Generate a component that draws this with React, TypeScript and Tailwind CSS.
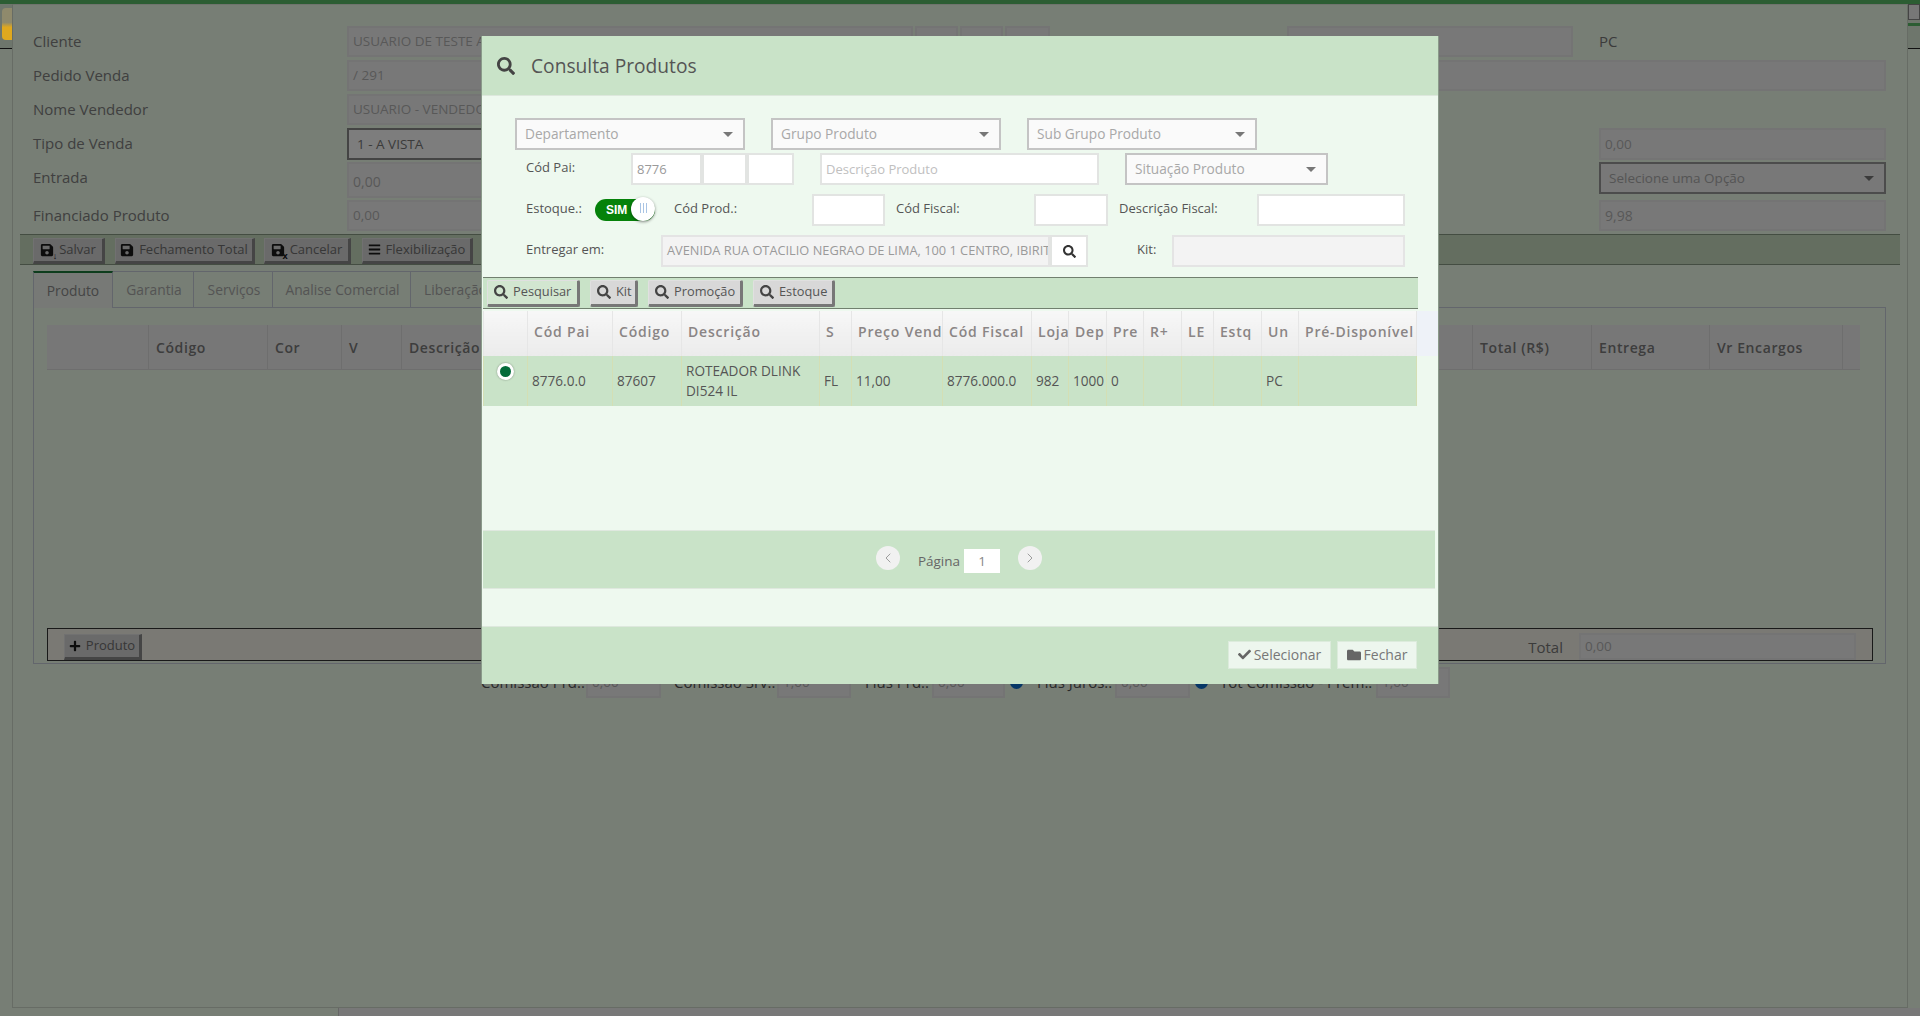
import { ChevronLeft, ChevronRight } from "lucide-react";
import { FaBars, FaCheck, FaFolder, FaPlus, FaSave, FaSearch } from "react-icons/fa";
import type { ReactNode } from "react";

const cols = [
  { w: "w-[44px]", t: "" },
  { w: "w-[85px]", t: "Cód Pai" },
  { w: "w-[69px]", t: "Código" },
  { w: "w-[138px]", t: "Descrição" },
  { w: "w-[32px]", t: "S" },
  { w: "w-[91px]", t: "Preço Venda" },
  { w: "w-[89px]", t: "Cód Fiscal" },
  { w: "w-[37px]", t: "Loja" },
  { w: "w-[38px]", t: "Dep" },
  { w: "w-[37px]", t: "Pre" },
  { w: "w-[38px]", t: "R+" },
  { w: "w-[32px]", t: "LE" },
  { w: "w-[48px]", t: "Estq" },
  { w: "w-[37px]", t: "Un" },
  { w: "w-[118px]", t: "Pré-Disponível" },
];

const row = ["", "8776.0.0", "87607", "ROTEADOR DLINK DI524 IL", "FL", "11,00", "8776.000.0", "982", "1000", "0", "", "", "", "PC", ""];

const Disabled = ({ className, value }: { className: string; value?: string }) => (
  <div className={`h-full border-2 border-[#e4e4e4] bg-[#f3f3f3] pl-[4px] flex items-center text-[12.8px] text-[#9a9a9a] overflow-hidden whitespace-nowrap ${className}`}>
    {value}
  </div>
);

const Arrow = () => <span className="ml-auto border-x-[5px] border-t-[5px] border-x-transparent border-t-[#777]" />;

const Select = ({ className, label }: { className: string; label: string }) => (
  <div className={`h-full flex items-center border-2 border-[#c4c4c4] pl-[8px] pr-[10px] pt-[1px] bg-[#fafafa] text-[13.7px] text-[#a8a8a8] ${className}`}>
    {label}
    <Arrow />
  </div>
);

const Box = ({ className, value }: { className: string; value?: string }) => (
  <div className={`h-full bg-white border-2 border-[#e2e4e2] px-[4px] pt-[1px] flex items-center text-[13px] text-[#9a9a9a] ${className}`}>
    {value}
  </div>
);

const ToolButton = ({ label, className }: { label: string; className: string }) => (
  <button className={`h-[27px] flex items-center gap-[5px] pl-[6px] border-t border-l border-[#e0e0e0] border-r-[3px] border-b-[3px] border-r-[#777] border-b-[#777] rounded-[2px] text-[12.8px] text-[#555] ${className}`}>
    <FaSearch className="size-[14px] text-[#444]" />
    {label}
  </button>
);

const FormLabel = ({ className, children }: { className: string; children: ReactNode }) => (
  <span className={`text-[13px] text-[#555] -mt-[3px] shrink-0 ${className}`}>{children}</span>
);

const Modal = () => (
  <div className="absolute left-[481px] top-[36px] w-[958px] h-[648px] flex flex-col bg-[#eef9ef] border-l border-r border-[#8a9a8a] text-[#555]">
    <div className="h-[60px] shrink-0 bg-[#c9e3c8] border-b border-[#dde8dd] flex items-center pl-[15px]">
      <FaSearch className="size-[18px] text-[#444]" />
      <span className="ml-[16px] mt-[2px] text-[19.2px] text-[#555]">Consulta Produtos</span>
    </div>
    <div className="flex-1 pl-[1px]">
      <div className="mt-[22px] ml-[32px] h-[32px] flex gap-[26px]">
        <Select className="w-[230px]" label="Departamento" />
        <Select className="w-[230px]" label="Grupo Produto" />
        <Select className="w-[230px]" label="Sub Grupo Produto" />
      </div>
      <div className="mt-[3px] ml-[43px] h-[32px] flex items-center">
        <FormLabel className="w-[105px]">Cód Pai:</FormLabel>
        <Box className="w-[71px]" value="8776" />
        <Box className="w-[45px]" />
        <Box className="w-[47px]" />
        <Box className="w-[279px] ml-[26px] text-[#c0c0c0]" value="Descrição Produto" />
        <Select className="w-[203px] ml-[26px]" label="Situação Produto" />
      </div>
      <div className="mt-[9px] ml-[43px] h-[32px] flex items-center">
        <FormLabel className="w-[69px]">Estoque.:</FormLabel>
        <div className="relative w-[60px] h-[22px] rounded-full bg-[#05820a] flex items-center pl-[11px] text-[12px] font-bold text-white font-['Liberation_Sans',sans-serif]">
          SIM
          <span className="absolute right-0 -top-[2px] size-[24px] rounded-full bg-white shadow-[0_1px_3px_rgba(0,0,0,0.45)] flex items-center justify-center gap-[2px] pb-[3px]">
            <i className="w-px h-[10px] bg-[#a9c4e4]" />
            <i className="w-px h-[10px] bg-[#a9c4e4]" />
            <i className="w-px h-[10px] bg-[#a9c4e4]" />
          </span>
        </div>
        <FormLabel className="w-[138px] ml-[19px]">Cód Prod.:</FormLabel>
        <Box className="w-[73px]" />
        <FormLabel className="w-[138px] ml-[11px]">Cód Fiscal:</FormLabel>
        <Box className="w-[74px]" />
        <FormLabel className="w-[138px] ml-[11px]">Descrição Fiscal:</FormLabel>
        <Box className="w-[148px]" />
      </div>
      <div className="mt-[9px] ml-[43px] h-[32px] flex items-center">
        <FormLabel className="w-[135px]">Entregar em:</FormLabel>
        <Disabled className="w-[389px]" value="AVENIDA RUA OTACILIO NEGRAO DE LIMA, 100 1 CENTRO, IBIRITE" />
        <button className="h-full w-[38px] bg-white border-2 border-[#e2e4e2] flex items-center justify-center">
          <FaSearch className="size-[13px] text-[#333]" />
        </button>
        <FormLabel className="w-[35px] ml-[49px]">Kit:</FormLabel>
        <Disabled className="w-[233px]" />
      </div>
      <div className="mt-[10px] h-[32px] w-[935px] bg-[#c9e3c8] border-y border-[#71806f] flex items-center pl-[4px] gap-[10px]">
        <ToolButton className="bg-[#d2e6d0] w-[93px]" label="Pesquisar" />
        <ToolButton className="bg-[#d8d8d8] w-[48px]" label="Kit" />
        <ToolButton className="bg-[#d8d8d8] w-[95px]" label="Promoção" />
        <ToolButton className="bg-[#d8d8d8] w-[82px]" label="Estoque" />
      </div>
      <div className="mt-[2px] h-[96px] bg-[linear-gradient(#eef2f8_0,#eef2f8_45px,transparent_45px)]">
        <table className="table-fixed w-[933px] border-collapse">
          <thead>
            <tr className="h-[45px]">
              {cols.map((c) => (
                <th key={c.t} className={`${c.w} bg-[linear-gradient(#f7f7f7,#ebebeb)] border-l border-r border-[#e6e6e6] pl-[6px] pb-[4px] text-left text-[14px] font-semibold tracking-[0.8px] text-[#8a8585] overflow-hidden whitespace-nowrap`}>
                  {c.t}
                </th>
              ))}
            </tr>
          </thead>
          <tbody>
            <tr className="h-[50px] bg-[#c9e3c8]">
              {row.map((v, i) => (
                <td key={i} className="relative border-l border-r border-[#d4dfb4] pl-[4px] pr-[2px] text-[13.6px] leading-[20px] text-[#555]">
                  {i === 0 ? (
                    <span className="absolute left-[13px] top-[7px] size-[17px] rounded-full bg-white shadow-[0_0_2px_rgba(0,0,0,0.4)] flex items-center justify-center">
                      <i className="size-[11px] rounded-full bg-[#046b3a]" />
                    </span>
                  ) : (
                    v
                  )}
                </td>
              ))}
            </tr>
          </tbody>
        </table>
      </div>
      <div className="mt-[123px] h-[59px] w-[952px] bg-[#c9e3c8] border-y border-[#dfe8df] flex items-center justify-center text-[13.5px]">
        <span className="-mt-[3px] size-[24px] rounded-full bg-[#f1f1f1] flex items-center justify-center">
          <ChevronLeft strokeWidth={1.2} className="size-[16px] text-[#888]" />
        </span>
        <span className="ml-[18px] mt-[3px] text-[#666]">Página</span>
        <span className="ml-[4px] mt-[3px] w-[36px] h-[24px] bg-white flex items-center justify-center text-[#888]">1</span>
        <span className="ml-[18px] -mt-[3px] size-[24px] rounded-full bg-[#f1f1f1] flex items-center justify-center">
          <ChevronRight strokeWidth={1.2} className="size-[16px] text-[#888]" />
        </span>
      </div>
    </div>
    <div className="h-[58px] shrink-0 bg-[#c9e3c8] border-t border-[#dde8dd] flex items-center justify-end gap-[6px] pr-[21px] pb-[2px]">
      <button className="h-[28px] w-[103px] flex items-center justify-center gap-[3px] bg-[#edf6ee] border border-[#dcebdc] text-[14px] text-[#777]">
        <FaCheck className="size-[13px] text-[#666]" />
        Selecionar
      </button>
      <button className="h-[28px] w-[80px] flex items-center justify-center gap-[3px] bg-[#edf6ee] border border-[#dcebdc] text-[14px] text-[#777]">
        <FaFolder className="size-[14px] text-[#666]" />
        Fechar
      </button>
    </div>
  </div>
);

const BgButton = ({ icon, label, className }: { icon: ReactNode; label: string; className: string }) => (
  <button className={`h-[26px] flex items-center justify-center gap-[5px] bg-[#d4d4d4] border-l border-t border-[#e2e2e2] border-r-[3px] border-b-[3px] border-r-[#8a8a8a] border-b-[#8a8a8a] text-[13px] text-[#6e6e6e] ${className}`}>
    {icon}
    {label}
  </button>
);

const SaveIcon = ({ mark }: { mark?: string }) => (
  <span className="relative inline-flex">
    <FaSave className="size-[14px] text-[#1a1a1a]" />
    {mark && <span className="absolute -right-[3px] -bottom-[3px] text-[9px] leading-none font-bold text-[#1a1a1a]">{mark}</span>}
  </span>
);

const BgLabel = ({ children, className = "" }: { children: ReactNode; className?: string }) => (
  <span className={`w-[314px] shrink-0 text-[15px] text-[#808080] ${className}`}>{children}</span>
);

const BgInput = ({ className, value }: { className: string; value?: string }) => (
  <div className={`h-full border-2 border-[#e8e8e8] bg-[#f0f0f0] flex items-center pl-[4px] text-[13.5px] text-[#b0b0b0] ${className}`}>
    {value}
  </div>
);

const tableHead = [
  { w: "w-[101px]", t: "" },
  { w: "w-[119px]", t: "Código" },
  { w: "w-[74px]", t: "Cor" },
  { w: "w-[60px]", t: "V" },
  { w: "flex-1", t: "Descrição" },
  { w: "w-[119px]", t: "Total (R$)" },
  { w: "w-[118px]", t: "Entrega" },
  { w: "w-[133px]", t: "Vr Encargos" },
  { w: "w-[18px]", t: "" },
];

export default function App() {
  return (
    <div className="relative h-[1016px] w-[1920px] overflow-hidden bg-[#eefcea] font-['Open_Sans',sans-serif]">
      <div className="h-[4px] bg-[#59ba66]" />
      <div className="flex h-[1004px]">
        <div className="w-[12px] shrink-0">
          <div className="h-[45px] border-b border-[#222] bg-[#dcedd8]" />
        </div>
        <div className="flex-1 border border-[#cfd8ca] border-t-[#dfe6db]">
          <div className="pl-[20px] pt-[21px] pr-[21px]">
            <div className="h-[31px] flex items-center">
              <BgLabel>Cliente</BgLabel>
              <BgInput className="w-[566px]" value="USUARIO DE TESTE A" />
              <BgInput className="w-[43px] ml-[2px]" />
              <BgInput className="w-[43px] ml-[2px]" />
              <BgInput className="w-[45px] ml-[2px]" />
              <BgInput className="w-[286px] ml-[237px]" />
              <span className="ml-[26px] text-[15px] text-[#777]">PC</span>
            </div>
            <div className="mt-[3px] h-[31px] flex items-center">
              <BgLabel>Pedido Venda</BgLabel>
              <BgInput className="w-[1539px]" value="/ 291" />
            </div>
            <div className="mt-[3px] h-[31px] flex items-center">
              <BgLabel>Nome Vendedor</BgLabel>
              <BgInput className="w-[566px]" value="USUARIO - VENDEDOR" />
            </div>
            <div className="mt-[3px] h-[32px] flex items-center">
              <BgLabel className="-mt-[2px]">Tipo de Venda</BgLabel>
              <div className="w-[566px] h-full border-2 border-[#888] bg-[#fafafa] flex items-center pl-[8px] text-[13.5px] text-[#777]">1 - A VISTA</div>
              <BgInput className="w-[287px] ml-[686px]" value="0,00" />
            </div>
            <div className="mt-[2px] h-[36px] flex items-center">
              <BgLabel className="-mt-[6px]">Entrada</BgLabel>
              <BgInput className="w-[566px] bg-[#dcdcdc] text-[14px] pt-[3px]" value="0,00" />
              <div className="ml-[686px] w-[287px] h-[32px] -mt-[4px] border-2 border-[#999] bg-[#f0f0f0] flex items-center pl-[8px] pr-[10px] text-[13.5px] text-[#aaa]">
                Selecione uma Opção
                <Arrow />
              </div>
            </div>
            <div className="mt-[2px] h-[31px] flex items-center">
              <BgLabel>Financiado Produto</BgLabel>
              <BgInput className="w-[566px]" value="0,00" />
              <BgInput className="w-[287px] ml-[686px] text-[14px]" value="9,98" />
            </div>
          </div>
          <div className="mt-[3px] ml-[7px] w-[1880px] h-[31px] bg-[#c9dcc0] border-y border-[#889a84] flex items-center pl-[13px]">
            <BgButton className="w-[72px] mt-[2px]" icon={<SaveIcon mark="↓" />} label="Salvar" />
            <BgButton className="w-[140px] ml-[10px] mt-[2px]" icon={<SaveIcon />} label="Fechamento Total" />
            <BgButton className="w-[87px] ml-[9px] mt-[2px]" icon={<SaveIcon mark="x" />} label="Cancelar" />
            <BgButton className="w-[111px] ml-[11px] mt-[2px]" icon={<FaBars className="size-[13px] text-[#1a1a1a]" />} label="Flexibilização" />
          </div>
          <div className="ml-[20px] mt-[6px] w-[1853px]">
            <div className="flex h-[37px] text-[13.8px] text-[#a9a9a9]">
              <span className="w-[80px] pt-[2px] border-t-2 border-t-[#1c7a3a] border-l border-r border-[#c6ccd8] bg-[#eef2ec] flex items-center justify-center text-[#8a8a8a]">Produto</span>
              <span className="w-[81px] pl-[2px] pt-[2px] border-t border-r border-b border-[#c6ccd8] flex items-center justify-center">Garantia</span>
              <span className="w-[79px] pl-[2px] pt-[2px] border-t border-r border-b border-[#c6ccd8] flex items-center justify-center">Serviços</span>
              <span className="w-[138px] pl-[2px] pt-[2px] border-t border-r border-b border-[#c6ccd8] flex items-center justify-center">Analise Comercial</span>
              <span className="w-[90px] pt-[2px] border-t border-r border-b border-[#c6ccd8] flex items-center justify-center">Liberação</span>
              <span className="flex-1 border-b border-[#c6ccd8]" />
            </div>
            <div className="h-[356px] border-l border-r border-b border-[#c6ccd8] pl-[13px] pt-[17px] flex flex-col">
              <div className="flex w-[1813px] h-[45px] bg-[#eeeeee] border-b border-[#dcdcdc]">
                {tableHead.map((c, i) => (
                  <span key={i} className={`${c.w} ${i > 0 ? "border-l border-[#dcdcdc]" : ""} flex items-center pl-[7px] text-[14px] font-semibold tracking-[0.6px] text-[#7a7a7a]`}>
                    {c.t}
                  </span>
                ))}
              </div>
              <div className="mt-auto mb-[2px] w-[1826px] h-[33px] border border-[#333] bg-[#f4f2e8] flex items-center pl-[16px] pr-[16px]">
                <BgButton className="w-[78px] mt-[4px]" icon={<FaPlus className="size-[12px] text-[#1a1a1a]" />} label="Produto" />
                <span className="ml-auto mt-[6px] text-[15px] text-[#777]">Total</span>
                <BgInput className="w-[277px] !h-[27px] ml-[16px] mt-[4px]" value="0,00" />
              </div>
            </div>
          </div>
          <div className="mt-[3px] h-[31px] flex items-center pl-[468px] text-[15px] text-[#555]">
            <span className="w-[105px]">Comissão Prd.:</span>
            <BgInput className="w-[75px]" value="0,00" />
            <span className="w-[103px] ml-[13px]">Comissão Srv.:</span>
            <BgInput className="w-[74px]" value="1,00" />
            <span className="w-[67px] ml-[14px]">Flus Prd.:</span>
            <BgInput className="w-[73px]" value="0,00" />
            <i className="size-[13px] ml-[5px] rounded-full bg-[#0d6ecd]" />
            <span className="w-[78px] ml-[14px]">Flus Juros.:</span>
            <BgInput className="w-[75px]" value="0,00" />
            <i className="size-[13px] ml-[5px] rounded-full bg-[#0d6ecd]" />
            <span className="w-[156px] ml-[12px]">Tot Comissão - Prem.:</span>
            <BgInput className="w-[74px]" value="1,00" />
          </div>
        </div>
        <div className="w-[12px] shrink-0">
          <div className="h-[45px] border-b border-[#222] bg-[#dcedd8]">
            <div className="h-[16px] bg-[#eee] border border-[#888]" />
            <div className="mt-[3px] h-[3px] bg-[#59ba66]" />
          </div>
        </div>
      </div>
      <div className="ml-[338px] h-[8px] bg-[#f0f0f0] border-l border-[#ccc]" />
      <div className="absolute inset-0 bg-black/50" />
      <div className="absolute left-[2px] top-[8px] w-[10px] h-[32px] rounded-l-[4px] bg-[linear-gradient(#8f8a6c_0,#8f8a6c_45%,#dfa81e_60%,#dfa81e_100%)]" />
      <Modal />
    </div>
  );
}
